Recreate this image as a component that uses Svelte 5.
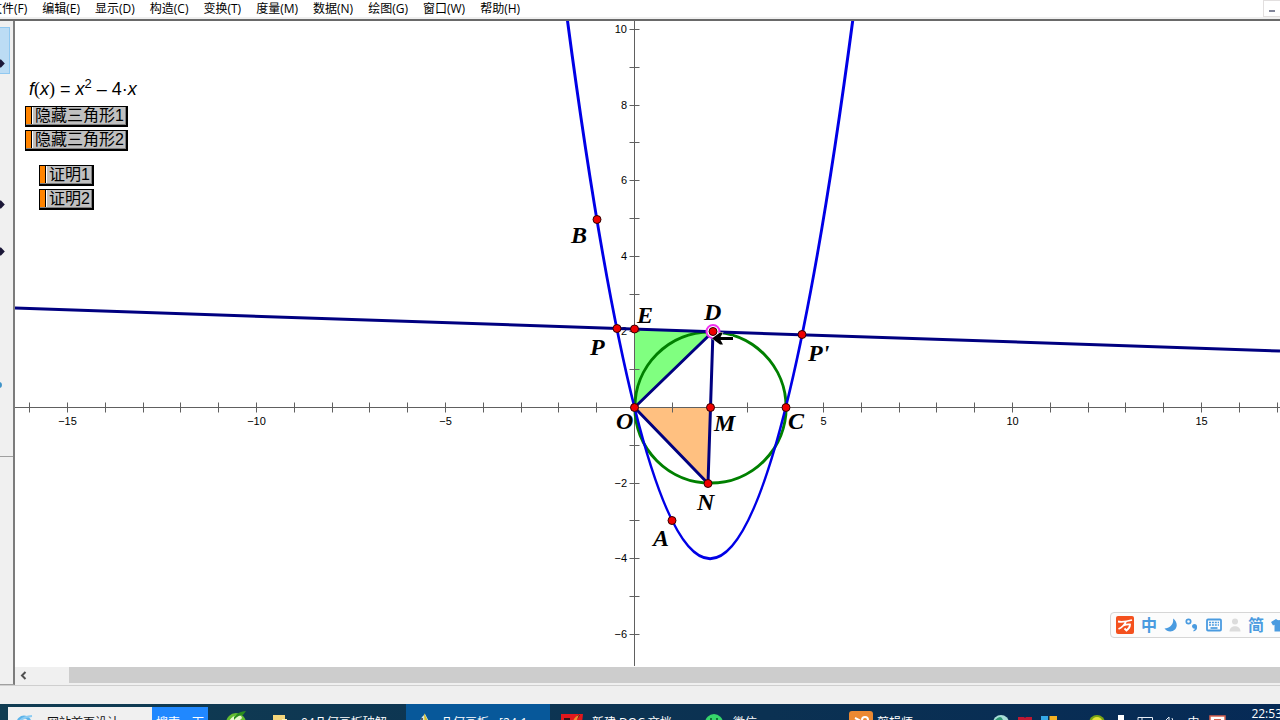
<script>
  const menus = ['文件(F)', '编辑(E)', '显示(D)', '构造(C)', '变换(T)', '度量(M)', '数据(N)', '绘图(G)', '窗口(W)', '帮助(H)'];

  const tools = [
    { name: '移动箭头工具', mark: 'more', selected: true },
    { name: '点工具' },
    { name: '圆工具' },
    { name: '线段直尺工具', mark: 'more' },
    { name: '多边形工具', mark: 'more' },
    { name: '文本工具' },
    { name: '标记工具' },
    { name: '信息工具', mark: 'dot' },
    { name: '自定义工具' }
  ];

  // Sketch coordinates: origin and unit length in canvas pixels.
  const ox = 619.5;
  const oy = 386.5;
  const unit = 37.8;
  const px = (x) => ox + x * unit;
  const py = (y) => oy - y * unit;
  const range = (a, b) => Array.from({ length: b - a + 1 }, (_, i) => a + i);
  const snap = (v) => Math.floor(v) + 0.5;
  const label = (n) => (n < 0 ? '−' + -n : String(n));

  const xTicks = range(-16, 17).filter((n) => n !== 0);
  const yTicks = range(-6, 10).filter((n) => n !== 0);
  const xLabels = [-15, -10, -5, 5, 10, 15];
  const yLabels = [10, 8, 6, 4, 2, -2, -4, -6];

  // y = x² − 4x on [−2, 6] as one exact quadratic Bézier.
  const parabola = `M${px(-2)} ${py(12)}Q${px(2)} ${py(-20)} ${px(6)} ${py(12)}`;

  const O = [ox, oy];
  const D = [698, 310.5];
  const E = [619.5, 308];
  const M = [695.5, 386.5];
  const N = [693, 462.5];
  const poly = (...p) => p.map((q) => q.join(',')).join(' ');

  const points = [
    { name: 'B', at: [582, 198.5], text: [556, 222] },
    { name: 'P', at: [602, 307.5], text: [575, 334] },
    { name: 'E', at: E, text: [622, 302] },
    { name: 'D', at: D, text: [689, 299] },
    { name: "P'", at: [787, 313.5], text: [793, 340] },
    { name: 'O', at: O, text: [601, 408] },
    { name: 'M', at: M, text: [699, 410] },
    { name: 'C', at: [771, 386.5], text: [773, 408] },
    { name: 'N', at: N, text: [682, 489] },
    { name: 'A', at: [657, 499.5], text: [638, 525] }
  ];
</script>

<div class="app">
  <nav class="menubar">
    <div class="menus">
      {#each menus as m}<button class="menu">{m}</button>{/each}
    </div>
    <button class="minimize" aria-label="最小化"><span></span></button>
  </nav>

  <div class="work">
    <aside class="tools">
      {#each tools as t}
        <button class="tool" class:selected={t.selected} aria-label={t.name}>
          {#if t.mark === 'more'}
            <svg class="more" width="5" height="9" viewBox="0 0 5 9"><path d="M0 0.5H1L4.800 4.500L1 8.500H0Z" fill="#1c1838" /></svg>
          {:else if t.mark === 'dot'}
            <svg class="dot" width="3" height="6" viewBox="0 0 3 6"><circle cx="-1" cy="3" r="3" fill="#3f93c8" /></svg>
          {/if}
        </button>
      {/each}
    </aside>

    <main class="document">
      <div class="canvas">
        <svg class="graph" role="img" aria-label="函数图像">
          <polygon points={poly(O, E, D)} fill="#80ff80" />
          <polygon points={poly(O, M, N)} fill="#ffc080" />

          <g class="axes">
            <line x1="0" y1={oy} x2="100%" y2={oy} />
            <line x1={ox} y1="0" x2={ox} y2="645" />
            {#each xTicks as n}<line x1={snap(px(n))} y1={oy - 5} x2={snap(px(n))} y2={oy + 5} />{/each}
            {#each yTicks as n}<line x1={ox - 5} y1={snap(py(n))} x2={ox + 5} y2={snap(py(n))} />{/each}
          </g>
          <g class="numbers">
            {#each xLabels as n}<text x={px(n)} y="404" text-anchor="middle">{label(n)}</text>{/each}
            {#each yLabels as n}<text x="612" y={Math.floor(py(n)) + 4} text-anchor="end">{label(n)}</text>{/each}
          </g>

          <circle cx="695.500" cy="386.500" r="75.600" class="circle" />
          <path d={parabola} class="curve" />
          <g class="lines">
            <line x1="-15" y1="286.500" x2="1265" y2="330" />
            <polyline points={poly(O, D, N, O)} />
          </g>

          <circle cx={D[0]} cy={D[1]} r="6.500" class="halo" />
          {#each points as p}
            <circle cx={p.at[0]} cy={p.at[1]} r="4" class="point" />
            <text x={p.text[0]} y={p.text[1]} class="name">{p.name}</text>
          {/each}
          <path d="M697 317.500L705 311.500H708L705.500 316H718V319H705.500L708 323.500H705Z" class="cursor" />
        </svg>

        <div class="panel">
          <div class="formula"><i>f</i><span class="paren">(</span><i>x</i><span class="paren">)</span> = <i>x</i><sup>2</sup> – 4·<i>x</i></div>
          <div class="actions">
            <button class="action">隐藏三角形1</button>
            <button class="action">隐藏三角形2</button>
          </div>
          <div class="actions proofs">
            <button class="action">证明1</button>
            <button class="action">证明2</button>
          </div>
        </div>

        <div class="ime">
          <svg width="18" height="18" viewBox="0 0 18 18">
            <rect width="18" height="18" rx="2" fill="#f4511e" />
            <path d="M2 5.500Q8 6.500 16 4M10 5.500Q8 10.500 2.500 13M7.500 9.500Q11 8 14 8.500Q14 12 10.500 14.500L8.500 12.500" fill="none" stroke="#fff" stroke-width="1.800" />
          </svg>
          <span class="glyph">中</span>
          <svg width="14" height="14" viewBox="0 0 14 14"><path d="M9 0.500C10 6 6 10 0.500 10.500C3 14 8 14.500 11 11.500C14 8.500 13 3 9 0.500Z" fill="#4a9be0" /></svg>
          <svg width="14" height="14" viewBox="0 0 14 14"><circle cx="3.500" cy="3.500" r="2.200" fill="none" stroke="#4a9be0" stroke-width="1.700" /><path d="M7 8.500A2.500 2.500 0 1 1 12 8.500C12.500 11 11 13 8.500 13.500V12Q10 11.500 10 10.800Q7.500 11 7 8.500Z" fill="#4a9be0" /></svg>
          <svg width="16" height="14" viewBox="0 0 16 14"><rect x="1" y="1.500" width="14" height="11" rx="1" fill="none" stroke="#4a9be0" stroke-width="1.800" /><path d="M3 4.500H13M3 7H13" stroke="#4a9be0" stroke-width="1.700" stroke-dasharray="2 0.900" /><path d="M4.500 10H11.500" stroke="#4a9be0" stroke-width="1.700" /></svg>
          <svg class="person" width="12" height="14" viewBox="0 0 12 14"><circle cx="6" cy="3.500" r="3" fill="#dcdcdc" /><path d="M0.500 13.500C0.500 6.500 11.500 6.500 11.500 13.500Z" fill="#dcdcdc" /></svg>
          <span class="glyph">简</span>
          <svg width="16" height="14" viewBox="0 0 16 14"><path d="M5 1Q8 3.500 11 1L16 4L14 7.500L12.500 6.800V13.500H3.500V6.800L2 7.500L0 4Z" fill="#4a9be0" /></svg>
        </div>
      </div>

      <div class="scroll">
        <button aria-label="向左滚动">
          <svg width="7" height="9" viewBox="0 0 7 9"><path d="M5.500 1L2 4.500L5.500 8" fill="none" stroke="#505050" stroke-width="2" /></svg>
        </button>
        <div class="thumb"></div>
      </div>
    </main>
  </div>

  <div class="status"></div>

  <footer class="taskbar">
    <div class="tasks">
      <div class="search">
        <svg width="18" height="18" viewBox="0 0 18 18"><circle cx="9" cy="9" r="6" fill="none" stroke="#5db4ea" stroke-width="3" /><path d="M4 9H14M1 14Q4 3 17 2" fill="none" stroke="#8cccf2" stroke-width="2" /></svg>
        <span>网站首页设计</span>
      </div>
      <button class="go">搜索一下</button>
      <button class="task browser" aria-label="浏览器">
        <svg width="22" height="24" viewBox="0 0 22 24"><circle cx="11" cy="12" r="10" fill="#64bd31" /><path d="M3 13Q5 5 14 4Q17 5 17 7Q14 11 6 13Z" fill="#e9f9cf" /><path d="M9 6Q14 0 21 0L18 4Q13 4 9 9Z" fill="#2b8e1e" /></svg>
      </button>
      <button class="task">
        <svg width="14" height="16" viewBox="0 0 14 16"><path d="M0 0H12V15H0Z" fill="#f4d67b" /><path d="M9 4H14V15H9Z" fill="#fff0b5" /></svg>
        <span class="folder">04几何画板破解</span>
      </button>
      <button class="task active">
        <svg width="16" height="20" viewBox="0 0 16 20"><path d="M1 12L5 4L8 1L15 14L8 18Z" fill="#d7e6df" /><path d="M7 0L13 12L8 16Z" fill="#d5bf28" /><path d="M5 5V15" stroke="#5a6266" stroke-width="2" /></svg>
        <span>几何画板 - [24-1.gsp]</span>
      </button>
      <button class="task">
        <svg width="23" height="20" viewBox="0 0 23 20"><path d="M0 1H22L20 19H0Z" fill="#e3181c" /><path d="M3 6H8V10H3M12 10L18 2M14 8L18 17" fill="none" stroke="#351317" stroke-width="2" /><path d="M12 8Q14 3 18 2L15 9Z" fill="#f08b2c" /></svg>
        <span>新建 DOC 文档</span>
      </button>
      <button class="task chat">
        <svg width="18" height="18" viewBox="0 0 18 18"><circle cx="9" cy="9" r="9" fill="#37d66b" /><path d="M6 4V7M12 4V7" stroke="#14743a" stroke-width="2" /></svg>
        <span>微信</span>
      </button>
      <button class="task editor">
        <svg width="24" height="24" viewBox="0 0 24 24"><rect width="24" height="24" rx="3" fill="#ec8932" /><path d="M6 7L10 9L7 12" fill="none" stroke="#fff" stroke-width="2" /><circle cx="16" cy="9" r="3" fill="none" stroke="#fff" stroke-width="2" /></svg>
        <span>剪辑师</span>
      </button>
    </div>

    <div class="tray">
      <svg width="16" height="16" viewBox="0 0 16 16"><circle cx="8" cy="8" r="8" fill="#a9ded8" /><path d="M2 5Q8-1 10 5L5 9Z" fill="#2d9a73" /></svg>
      <svg width="16" height="16" viewBox="0 0 16 16"><path d="M1 2H7L8 3L9 2H15V14H1Z" fill="#c01832" /></svg>
      <svg class="shield" width="16" height="16" viewBox="0 0 16 16"><path d="M0 1H7V15H0Z" fill="#35a9e8" /><path d="M8.500 1H16V15H8.500Z" fill="#f6b222" /></svg>
      <svg width="16" height="16" viewBox="0 0 16 16"><circle cx="8" cy="8" r="8" fill="#7aa414" /><ellipse cx="8" cy="6" rx="5" ry="4" fill="#e5e438" /></svg>
      <svg width="16" height="16" viewBox="0 0 16 16"><path d="M5 0H11V5H13V14H3V5H5Z" fill="#fff" /></svg>
      <svg width="16" height="16" viewBox="0 0 16 16"><path d="M1 2.500H15.500V13H1ZM5 3V13M1 5.500H15" fill="none" stroke="#e7edf5" /></svg>
      <svg width="16" height="16" viewBox="0 0 16 16"><path d="M1 6H4L8 2V14L4 10H1ZM11 3Q14 8 11 13" fill="none" stroke="#e7edf5" /></svg>
      <span class="lang">中</span>
      <svg width="17" height="17" viewBox="0 0 17 17"><rect x="1" y="1" width="15" height="15" fill="#fff" stroke="#d8604d" stroke-width="1.500" /><path d="M5 5H12" stroke="#d8604d" stroke-width="2" /></svg>
      <time>22:53</time>
    </div>
  </footer>
</div>

<style>
  :global(body) { margin: 0; overflow: hidden; }
  :global(*) { box-sizing: border-box; }
  button { margin: 0; padding: 0; border: 0; background: none; color: inherit; font: inherit; white-space: nowrap; }
  svg { display: block; flex: none; }

  .app {
    display: flex; flex-direction: column;
    height: 100vh; overflow: hidden;
    background: #fff; color: #000;
    font: 12px/16px "Open Sans", "Noto Sans CJK SC", sans-serif;
  }

  .menubar {
    display: flex; flex: none; justify-content: space-between;
    height: 21px; overflow: hidden;
    border-bottom: 2px solid #696969;
    box-shadow: inset 0 -2px #f0f0f0;
  }
  .menus { display: flex; gap: 15px; margin-left: -10px; padding-top: 1px; height: 17px; }
  .minimize {
    display: flex; justify-content: center; align-items: flex-end;
    width: 17px; height: 17px; padding-bottom: 4px;
    border: solid #e2dfdf; border-width: 1px 0 1px 1px;
  }
  .minimize span { width: 6px; height: 2px; background: #82869a; }

  .work { display: flex; flex: 1; min-height: 0; }
  .tools {
    display: flex; flex-direction: column; flex: none;
    width: 15px; padding-top: 6px;
    background: #f0f0f0;
    border-right: 2px solid #7c7c7c; border-bottom: 1px solid #a0a0a0;
  }
  .tool { display: block; width: 10px; height: 47px; }
  .tool:last-child { width: 100%; height: 54px; border-bottom: 1px solid #a0a0a0; }
  .tool.selected { background: #bcdcf4; box-shadow: inset -1px 1px #90c8f0, inset 0 -1px #90c8f0; }
  .more { margin-top: 26px; }
  .dot { margin-top: 10px; }

  .document { display: flex; flex: 1; flex-direction: column; min-width: 0; }
  .canvas { position: relative; display: grid; flex: 1; min-height: 0; overflow: hidden; }
  .graph, .panel { grid-area: 1 / 1; }
  .graph { width: 100%; height: 100%; }
  .axes line { stroke: #606060; stroke-width: 1; }
  .numbers { font: 11px "Liberation Sans", sans-serif; }
  .circle { fill: none; stroke: #008000; stroke-width: 3; }
  .curve { fill: none; stroke: #0000e6; stroke-width: 3; }
  .lines { fill: none; stroke: #000080; stroke-width: 3; stroke-linejoin: round; }
  .point { fill: #f00000; stroke: #300000; stroke-width: 1; }
  .halo { fill: #fff; stroke: #f030f0; stroke-width: 2; }
  .name { font: italic bold 24px "Liberation Serif", serif; }
  .cursor { fill: #000; stroke: #fff; stroke-width: 1; paint-order: stroke; }

  .panel { position: relative; justify-self: start; padding: 56px 0 0 10px; }
  .formula { padding-left: 4px; font: 18px/24px "Liberation Sans", sans-serif; white-space: nowrap; }
  .formula sup { font-size: 13px; line-height: 0; vertical-align: 7px; }
  .paren { font-family: "Liberation Serif", serif; }
  .actions { display: flex; flex-direction: column; align-items: flex-start; gap: 3px; padding-top: 5px; }
  .proofs { padding: 14px 0 0 14px; }
  .action {
    height: 21px; padding: 0 2px 0 9px;
    border: 1px solid #000; border-right-width: 2px; border-bottom-width: 2px;
    background: linear-gradient(90deg, #ff8400 5px, #000 5px, #000 6px, #fff 6px, #fff 7px, #c0c0c0 7px);
    box-shadow: inset -1px -1px #808080;
    font: 16px/18px "Liberation Sans", "Noto Sans CJK SC", sans-serif;
  }

  .ime {
    position: absolute; right: -8px; bottom: 29px;
    display: flex; align-items: center; gap: 7px;
    height: 26px; padding: 0 0 0 5px;
    border: 1px solid #d6d6d6; border-radius: 4px; background: #fcfcfc;
  }
  .glyph { padding-bottom: 2px; color: #4a9be0; font: bold 16px/20px "Noto Sans CJK SC", sans-serif; }

  .scroll { display: flex; flex: none; height: 18px; padding-bottom: 2px; background: #f0f0f0; }
  .scroll button { display: flex; align-items: center; width: 54px; padding-left: 5px; }
  .thumb { flex: 1; background: #cdcdcd; }

  .status { flex: none; height: 19px; border-top: 1px solid #cfcfcf; background: #efefef; }

  .taskbar {
    display: flex; flex: none; justify-content: space-between;
    height: 16px; overflow: hidden;
    background: linear-gradient(90deg, #103c52, #0b3152 60%, #062a56);
    color: #fff;
  }
  .tasks { display: flex; height: 38px; padding-left: 8px; }
  .search, .go { height: 31px; margin-top: 3px; }
  .search { display: flex; align-items: center; gap: 14px; width: 144px; padding-left: 7px; background: #f0f0f0; color: #111; }
  .go { width: 56px; background: #2088ff; }
  .task { display: flex; align-items: center; gap: 8px; width: 144px; padding-left: 11px; overflow: hidden; }
  .task.browser { width: 54px; padding-left: 17px; }
  .task.active { background: #07589a; }
  .task.chat { gap: 10px; }
  .task.editor { gap: 4px; }
  .folder { padding-left: 6px; }
  .tray { display: flex; align-items: center; gap: 8px; height: 38px; margin-right: -2px; }
  .shield { margin-right: 24px; }
  .lang { width: 16px; text-align: center; }
  time { align-self: flex-start; padding: 2px 0 0 17px; }
</style>
